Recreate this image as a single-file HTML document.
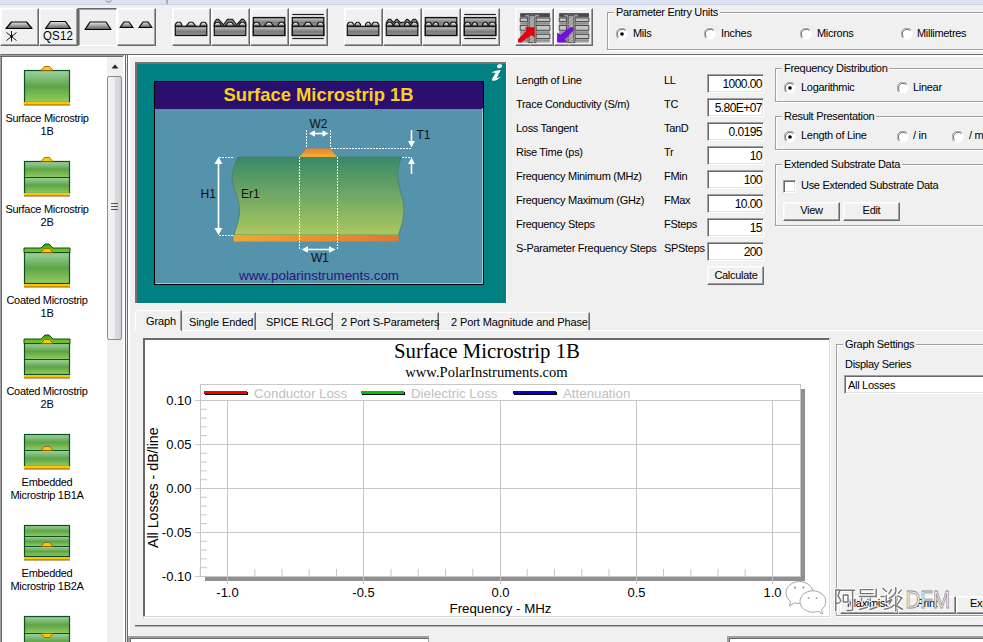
<!DOCTYPE html><html><head><meta charset="utf-8"><style>
*{margin:0;padding:0;box-sizing:border-box}
body{width:983px;height:642px;overflow:hidden;background:#f0f0f0;position:relative;font-family:"Liberation Sans",sans-serif;font-size:11px;color:#000}
.t{position:absolute;white-space:nowrap;line-height:13px;letter-spacing:-0.3px}
.btn{position:absolute;background:#f0f0f0;border-style:solid;border-width:1px;border-color:#fff #696969 #696969 #fff;box-shadow:inset -1px -1px 0 #a0a0a0, inset 1px 1px 0 #f8f8f8}
.btnp{position:absolute;background:#f0f0f0;border-style:solid;border-width:1px;border-color:#696969 #fff #fff #696969;box-shadow:inset 1px 1px 0 #a0a0a0}
.grp{position:absolute;border:1px solid #a0a0a0;box-shadow:1px 1px 0 #fff, inset 1px 1px 0 #fff}
.grpt{position:absolute;background:#f0f0f0;padding:0 2px;white-space:nowrap;line-height:13px;letter-spacing:-0.3px}
.edit{position:absolute;background:#fff;border-style:solid;border-width:1px;border-color:#a0a0a0 #fff #fff #a0a0a0;box-shadow:inset 1px 1px 0 #696969, inset -1px -1px 0 #e3e3e3}
</style></head><body>
<div style="position:absolute;left:0px;top:0px;width:983px;height:4px;background:#dbe3f3"></div>
<div style="position:absolute;left:0px;top:4px;width:983px;height:1px;background:#c9d3e6"></div>
<div class="btn" style="left:0px;top:8px;width:39px;height:38px"></div>
<div class="btn" style="left:39px;top:8px;width:39px;height:38px"></div>
<div class="btnp" style="left:78px;top:8px;width:39px;height:38px"></div>
<div class="btn" style="left:117px;top:8px;width:39px;height:38px"></div>
<div class="btn" style="left:172px;top:8px;width:39px;height:38px"></div>
<div class="btn" style="left:211px;top:8px;width:39px;height:38px"></div>
<div class="btn" style="left:250px;top:8px;width:39px;height:38px"></div>
<div class="btn" style="left:289px;top:8px;width:39px;height:38px"></div>
<div class="btn" style="left:344px;top:8px;width:39px;height:38px"></div>
<div class="btn" style="left:383px;top:8px;width:39px;height:38px"></div>
<div class="btn" style="left:422px;top:8px;width:39px;height:38px"></div>
<div class="btn" style="left:461px;top:8px;width:39px;height:38px"></div>
<div class="btn" style="left:515px;top:8px;width:39px;height:38px"></div>
<div class="btn" style="left:554px;top:8px;width:39px;height:38px"></div>
<div class="grp" style="left:607px;top:12px;width:400px;height:38px"></div>
<div class="grpt" style="left:614px;top:6px">Parameter Entry Units</div>
<svg style="position:absolute;left:616px;top:28px" width="12" height="12" viewBox="0 0 12 12"><circle cx="6" cy="6" r="5.5" fill="#fff"/><path d="M10.2 1.8 A5.5 5.5 0 0 0 1.8 10.2" stroke="#a0a0a0" stroke-width="1" fill="none"/><path d="M9.3 2.7 A4.3 4.3 0 0 0 2.7 9.3" stroke="#696969" stroke-width="1" fill="none"/><circle cx="6" cy="6" r="1.8" fill="#000"/></svg>
<div class="t" style="left:633px;top:27px;">Mils</div>
<svg style="position:absolute;left:704px;top:28px" width="12" height="12" viewBox="0 0 12 12"><circle cx="6" cy="6" r="5.5" fill="#fff"/><path d="M10.2 1.8 A5.5 5.5 0 0 0 1.8 10.2" stroke="#a0a0a0" stroke-width="1" fill="none"/><path d="M9.3 2.7 A4.3 4.3 0 0 0 2.7 9.3" stroke="#696969" stroke-width="1" fill="none"/></svg>
<div class="t" style="left:721px;top:27px;">Inches</div>
<svg style="position:absolute;left:800px;top:28px" width="12" height="12" viewBox="0 0 12 12"><circle cx="6" cy="6" r="5.5" fill="#fff"/><path d="M10.2 1.8 A5.5 5.5 0 0 0 1.8 10.2" stroke="#a0a0a0" stroke-width="1" fill="none"/><path d="M9.3 2.7 A4.3 4.3 0 0 0 2.7 9.3" stroke="#696969" stroke-width="1" fill="none"/></svg>
<div class="t" style="left:817px;top:27px;">Microns</div>
<svg style="position:absolute;left:901px;top:28px" width="12" height="12" viewBox="0 0 12 12"><circle cx="6" cy="6" r="5.5" fill="#fff"/><path d="M10.2 1.8 A5.5 5.5 0 0 0 1.8 10.2" stroke="#a0a0a0" stroke-width="1" fill="none"/><path d="M9.3 2.7 A4.3 4.3 0 0 0 2.7 9.3" stroke="#696969" stroke-width="1" fill="none"/></svg>
<div class="t" style="left:917px;top:27px;">Millimetres</div>
<div style="position:absolute;left:0px;top:54px;width:983px;height:1px;background:#696969"></div>
<div style="position:absolute;left:0px;top:55px;width:125px;height:587px;background:#fff"></div>
<div style="position:absolute;left:0px;top:54px;width:1px;height:588px;background:#a0a0a0"></div>
<div style="position:absolute;left:1px;top:55px;width:1px;height:587px;background:#696969"></div>
<div style="position:absolute;left:0px;top:55px;width:124px;height:1px;background:#a0a0a0"></div>
<div style="position:absolute;left:0px;top:56px;width:123px;height:1px;background:#696969"></div>
<div style="position:absolute;left:124px;top:55px;width:1px;height:587px;background:#fff"></div>
<div style="position:absolute;left:125px;top:54px;width:1px;height:588px;background:#696969"></div>
<div style="position:absolute;left:107px;top:57px;width:16px;height:585px;background:#f0f0f0"></div>
<div style="position:absolute;left:127px;top:54px;width:1px;height:588px;background:#696969"></div>
<div style="position:absolute;left:128px;top:55px;width:855px;height:2px;background:#fff"></div>
<div style="position:absolute;left:128px;top:55px;width:2px;height:587px;background:#fff"></div>
<div style="position:absolute;left:135px;top:62px;width:372px;height:242px;background:#fff"></div>
<div style="position:absolute;left:135px;top:62px;width:371px;height:241px;background:#7a7070"></div>
<div style="position:absolute;left:137px;top:64px;width:369px;height:239px;background:#008080"></div>
<svg style="position:absolute;left:137px;top:64px" width="369" height="239" viewBox="137 64 369 239">
<defs>
<linearGradient id="diel" x1="0" y1="0" x2="0" y2="1"><stop offset="0" stop-color="#3a8868"/><stop offset="1" stop-color="#aac860"/></linearGradient>
<linearGradient id="gnd" x1="0" y1="0" x2="1" y2="0"><stop offset="0" stop-color="#f0a830"/><stop offset="1" stop-color="#e07830"/></linearGradient>
<linearGradient id="trc" x1="0" y1="0" x2="0" y2="1"><stop offset="0" stop-color="#e8802c"/><stop offset="1" stop-color="#f4b030"/></linearGradient>
</defs>
<rect x="137" y="64" width="369" height="239" fill="#008080"/>
<rect x="154.5" y="81.5" width="329" height="203" fill="#5592ab" stroke="#000" stroke-width="1"/>
<rect x="155" y="82" width="328" height="27" fill="#2b0f6e"/>
<path d="M155.5 283.5 H482.5 V108" stroke="#9cc8dc" stroke-width="1" fill="none"/>
<text x="318.5" y="101" text-anchor="middle" font-family="Liberation Sans" font-weight="700" font-size="18.4" fill="#f8d020">Surface Microstrip 1B</text>
<path d="M238 157 H401.7 C398.5 164 397.5 171 398 178 C399 190 404 200 404 210 C404 220 400.5 228 398.5 235 H234 C236 228 239.6 220 239.6 210 C239.6 198 232 188 232 178 C232 170 235.5 162 238 157 Z" fill="url(#diel)" stroke="#3b7a5e" stroke-width="0.6"/>
<rect x="233.5" y="235" width="165" height="6.5" fill="url(#gnd)"/>
<path d="M299.5 157 L306.5 148.5 H330 L337 157 Z" fill="url(#trc)"/>
<g stroke="#fff" stroke-width="1" stroke-dasharray="2,1" fill="none">
<path d="M299.5 157 V249"/><path d="M337.5 157 V249"/>
<path d="M306.5 130 V148"/><path d="M330.5 130 V148"/>
<path d="M331 148.5 H412"/><path d="M402 157.5 H412"/>
<path d="M219 157.5 H233"/><path d="M219 235.5 H234"/>
</g>
<g stroke="#fff" stroke-width="1.6" fill="none">
<path d="M218.5 162 V230"/>
<path d="M312 133.5 H325"/>
<path d="M306 249.5 H331"/>
<path d="M411.5 130 V143"/>
<path d="M411.5 174 V162"/>
</g>
<g fill="#fff">
<path d="M218.5 157 L214.5 164 H222.5 Z"/><path d="M218.5 235 L214.5 228 H222.5 Z"/>
<path d="M309 133.5 L315 130.3 V136.7 Z"/><path d="M328.5 133.5 L322.5 130.3 V136.7 Z"/>
<path d="M301.5 249.5 L308 246.3 V252.7 Z"/><path d="M335.5 249.5 L329 246.3 V252.7 Z"/>
<path d="M411.5 147.5 L408 141 H415 Z"/><path d="M411.5 157.5 L408 164 H415 Z"/>
</g>
<g font-family="Liberation Sans" font-size="12" fill="#111">
<text x="309.5" y="128">W2</text>
<text x="416.5" y="139">T1</text>
<text x="200.5" y="197.5">H1</text>
<text x="241" y="197.5">Er1</text>
<text x="311" y="262">W1</text>
</g>
<text x="319" y="280" text-anchor="middle" font-family="Liberation Sans" font-size="13.4" fill="#2a1480">www.polarinstruments.com</text>
<ellipse cx="499.6" cy="66.2" rx="2.7" ry="1.9" transform="rotate(-15 499.6 66.2)" fill="#fff"/><path d="M491.3 72.6 Q495 70.2 500.8 70.1 L496.6 78.2 Q498.8 77.6 500.8 76.4 Q497.5 80.6 493.6 80.8 Q491.2 80.8 492.3 78.4 L495.6 72.9 Q493.5 72.4 491.3 72.6 Z" fill="#fff"/>
</svg>
<div class="t" style="left:516px;top:74px;">Length of Line</div>
<div class="t" style="left:664px;top:74px;">LL</div>
<div class="edit" style="left:707px;top:74px;width:57px;height:19px"></div>
<div class="t" style="left:707px;top:78px;width:55px;text-align:right;font-size:12px;letter-spacing:-0.55px">1000.00</div>
<div class="t" style="left:516px;top:98px;">Trace Conductivity (S/m)</div>
<div class="t" style="left:664px;top:98px;">TC</div>
<div class="edit" style="left:707px;top:98px;width:57px;height:19px"></div>
<div class="t" style="left:707px;top:102px;width:55px;text-align:right;font-size:12px;letter-spacing:-0.55px">5.80E+07</div>
<div class="t" style="left:516px;top:122px;">Loss Tangent</div>
<div class="t" style="left:664px;top:122px;">TanD</div>
<div class="edit" style="left:707px;top:122px;width:57px;height:19px"></div>
<div class="t" style="left:707px;top:126px;width:55px;text-align:right;font-size:12px;letter-spacing:-0.55px">0.0195</div>
<div class="t" style="left:516px;top:146px;">Rise Time (ps)</div>
<div class="t" style="left:664px;top:146px;">Tr</div>
<div class="edit" style="left:707px;top:146px;width:57px;height:19px"></div>
<div class="t" style="left:707px;top:150px;width:55px;text-align:right;font-size:12px;letter-spacing:-0.55px">10</div>
<div class="t" style="left:516px;top:170px;">Frequency Minimum (MHz)</div>
<div class="t" style="left:664px;top:170px;">FMin</div>
<div class="edit" style="left:707px;top:170px;width:57px;height:19px"></div>
<div class="t" style="left:707px;top:174px;width:55px;text-align:right;font-size:12px;letter-spacing:-0.55px">100</div>
<div class="t" style="left:516px;top:194px;">Frequency Maximum (GHz)</div>
<div class="t" style="left:664px;top:194px;">FMax</div>
<div class="edit" style="left:707px;top:194px;width:57px;height:19px"></div>
<div class="t" style="left:707px;top:198px;width:55px;text-align:right;font-size:12px;letter-spacing:-0.55px">10.00</div>
<div class="t" style="left:516px;top:218px;">Frequency Steps</div>
<div class="t" style="left:664px;top:218px;">FSteps</div>
<div class="edit" style="left:707px;top:218px;width:57px;height:19px"></div>
<div class="t" style="left:707px;top:222px;width:55px;text-align:right;font-size:12px;letter-spacing:-0.55px">15</div>
<div class="t" style="left:516px;top:242px;">S-Parameter Frequency Steps</div>
<div class="t" style="left:664px;top:242px;">SPSteps</div>
<div class="edit" style="left:707px;top:242px;width:57px;height:19px"></div>
<div class="t" style="left:707px;top:246px;width:55px;text-align:right;font-size:12px;letter-spacing:-0.55px">200</div>
<div class="btn" style="left:707px;top:266px;width:57px;height:19px"></div>
<div class="t" style="left:713px;top:269px;width:46px;text-align:center">Calculate</div>
<div class="grp" style="left:775px;top:68px;width:300px;height:34px"></div>
<div class="grpt" style="left:782px;top:62px">Frequency Distribution</div>
<svg style="position:absolute;left:784px;top:82px" width="12" height="12" viewBox="0 0 12 12"><circle cx="6" cy="6" r="5.5" fill="#fff"/><path d="M10.2 1.8 A5.5 5.5 0 0 0 1.8 10.2" stroke="#a0a0a0" stroke-width="1" fill="none"/><path d="M9.3 2.7 A4.3 4.3 0 0 0 2.7 9.3" stroke="#696969" stroke-width="1" fill="none"/><circle cx="6" cy="6" r="1.8" fill="#000"/></svg>
<div class="t" style="left:801px;top:81px;">Logarithmic</div>
<svg style="position:absolute;left:897px;top:82px" width="12" height="12" viewBox="0 0 12 12"><circle cx="6" cy="6" r="5.5" fill="#fff"/><path d="M10.2 1.8 A5.5 5.5 0 0 0 1.8 10.2" stroke="#a0a0a0" stroke-width="1" fill="none"/><path d="M9.3 2.7 A4.3 4.3 0 0 0 2.7 9.3" stroke="#696969" stroke-width="1" fill="none"/></svg>
<div class="t" style="left:913px;top:81px;">Linear</div>
<div class="grp" style="left:775px;top:116px;width:300px;height:34px"></div>
<div class="grpt" style="left:782px;top:110px">Result Presentation</div>
<svg style="position:absolute;left:784px;top:131px" width="12" height="12" viewBox="0 0 12 12"><circle cx="6" cy="6" r="5.5" fill="#fff"/><path d="M10.2 1.8 A5.5 5.5 0 0 0 1.8 10.2" stroke="#a0a0a0" stroke-width="1" fill="none"/><path d="M9.3 2.7 A4.3 4.3 0 0 0 2.7 9.3" stroke="#696969" stroke-width="1" fill="none"/><circle cx="6" cy="6" r="1.8" fill="#000"/></svg>
<div class="t" style="left:801px;top:129px;">Length of Line</div>
<svg style="position:absolute;left:897px;top:131px" width="12" height="12" viewBox="0 0 12 12"><circle cx="6" cy="6" r="5.5" fill="#fff"/><path d="M10.2 1.8 A5.5 5.5 0 0 0 1.8 10.2" stroke="#a0a0a0" stroke-width="1" fill="none"/><path d="M9.3 2.7 A4.3 4.3 0 0 0 2.7 9.3" stroke="#696969" stroke-width="1" fill="none"/></svg>
<div class="t" style="left:913px;top:129px;">/ in</div>
<svg style="position:absolute;left:952px;top:131px" width="12" height="12" viewBox="0 0 12 12"><circle cx="6" cy="6" r="5.5" fill="#fff"/><path d="M10.2 1.8 A5.5 5.5 0 0 0 1.8 10.2" stroke="#a0a0a0" stroke-width="1" fill="none"/><path d="M9.3 2.7 A4.3 4.3 0 0 0 2.7 9.3" stroke="#696969" stroke-width="1" fill="none"/></svg>
<div class="t" style="left:969px;top:129px;">/ m</div>
<div class="grp" style="left:775px;top:164px;width:300px;height:62px"></div>
<div class="grpt" style="left:782px;top:158px">Extended Substrate Data</div>
<div class="edit" style="left:783px;top:180px;width:13px;height:13px"></div>
<div class="t" style="left:801px;top:179px;">Use Extended Substrate Data</div>
<div class="btn" style="left:783px;top:202px;width:57px;height:19px"></div>
<div class="t" style="left:783px;top:204px;width:57px;text-align:center">View</div>
<div class="btn" style="left:843px;top:202px;width:57px;height:19px"></div>
<div class="t" style="left:843px;top:204px;width:57px;text-align:center">Edit</div>
<div style="position:absolute;left:135px;top:330px;width:848px;height:1px;background:#fff"></div>
<div style="position:absolute;left:135px;top:310px;width:47px;height:21px;background:#f0f0f0;border-left:1px solid #fff;border-top:1px solid #fff;border-right:1px solid #696969;border-top-left-radius:2px"></div>
<div style="position:absolute;left:180px;top:311px;width:1px;height:19px;background:#a0a0a0"></div>
<div class="t" style="left:146px;top:315px;letter-spacing:-0.1px">Graph</div>
<div style="position:absolute;left:182px;top:312px;width:74px;height:18px;border-top:1px solid #fff;border-right:1px solid #696969"></div>
<div style="position:absolute;left:254px;top:313px;width:1px;height:17px;background:#a0a0a0"></div>
<div class="t" style="left:189px;top:316px;letter-spacing:-0.1px">Single Ended</div>
<div style="position:absolute;left:257px;top:312px;width:76px;height:18px;border-top:1px solid #fff;border-right:1px solid #696969"></div>
<div style="position:absolute;left:331px;top:313px;width:1px;height:17px;background:#a0a0a0"></div>
<div class="t" style="left:266px;top:316px;letter-spacing:-0.1px">SPICE RLGC</div>
<div style="position:absolute;left:334px;top:312px;width:105px;height:18px;border-top:1px solid #fff;border-right:1px solid #696969"></div>
<div style="position:absolute;left:437px;top:313px;width:1px;height:17px;background:#a0a0a0"></div>
<div class="t" style="left:341px;top:316px;letter-spacing:-0.1px">2 Port S-Parameters</div>
<div style="position:absolute;left:440px;top:312px;width:150px;height:18px;border-top:1px solid #fff;border-right:1px solid #696969"></div>
<div style="position:absolute;left:588px;top:313px;width:1px;height:17px;background:#a0a0a0"></div>
<div class="t" style="left:451px;top:316px;letter-spacing:-0.1px">2 Port Magnitude and Phase</div>
<div style="position:absolute;left:135px;top:625px;width:848px;height:1px;background:#696969"></div>
<div style="position:absolute;left:135px;top:626px;width:848px;height:1px;background:#b4b4b4"></div>
<div style="position:absolute;left:143px;top:338px;width:688px;height:280px;background:#fff;border-style:solid;border-width:2px 2px 2px 2px;border-color:#696969 #fff #fff #696969"></div>
<div style="position:absolute;left:829px;top:338px;width:1px;height:279px;background:#d8d8d8"></div>
<div style="position:absolute;left:143px;top:616px;width:687px;height:1px;background:#d8d8d8"></div>
<svg style="position:absolute;left:145px;top:340px" width="684" height="276" viewBox="145 340 684 276">
<text x="487" y="357.5" text-anchor="middle" font-family="Liberation Serif" font-size="20.8" fill="#000">Surface Microstrip 1B</text>
<text x="486.5" y="377" text-anchor="middle" font-family="Liberation Serif" font-size="14.55" fill="#000">www.PolarInstruments.com</text>
<rect x="801" y="389" width="4" height="192" fill="#909090"/>
<rect x="205" y="577" width="600" height="4" fill="#909090"/>
<rect x="200.5" y="384.5" width="600" height="16" fill="#fff" stroke="#c8c8c8"/>
<rect x="200.5" y="400.5" width="600" height="176" fill="#fff" stroke="#c8c8c8"/>
<g stroke="#c8c8c8" stroke-width="1">
<path d="M227.5 400 V584"/><path d="M363.5 400 V584"/><path d="M500.5 400 V584"/><path d="M636.5 400 V584"/><path d="M772.5 400 V584"/>
<path d="M195 400.5 H800"/><path d="M195 444.5 H800"/><path d="M195 488.5 H800"/><path d="M195 532.5 H800"/><path d="M195 576.5 H800"/>
<path d="M200 409.3 H207"/><path d="M200 418.1 H207"/><path d="M200 426.9 H207"/><path d="M200 435.7 H207"/><path d="M200 453.3 H207"/><path d="M200 462.1 H207"/><path d="M200 470.9 H207"/><path d="M200 479.7 H207"/><path d="M200 497.3 H207"/><path d="M200 506.1 H207"/><path d="M200 514.9 H207"/><path d="M200 523.7 H207"/><path d="M200 541.3 H207"/><path d="M200 550.1 H207"/><path d="M200 558.9 H207"/><path d="M200 567.7 H207"/><path d="M200.2 569 V576"/><path d="M254.8 569 V576"/><path d="M282.0 569 V576"/><path d="M309.2 569 V576"/><path d="M336.5 569 V576"/><path d="M391.0 569 V576"/><path d="M418.2 569 V576"/><path d="M445.5 569 V576"/><path d="M472.8 569 V576"/><path d="M527.2 569 V576"/><path d="M554.5 569 V576"/><path d="M581.8 569 V576"/><path d="M609.0 569 V576"/><path d="M663.5 569 V576"/><path d="M690.8 569 V576"/><path d="M718.0 569 V576"/><path d="M745.2 569 V576"/>
</g>
<g font-family="Liberation Sans" font-size="13" fill="#000">
<text x="191.5" y="405" text-anchor="end">0.10</text>
<text x="191.5" y="449" text-anchor="end">0.05</text>
<text x="191.5" y="493" text-anchor="end">0.00</text>
<text x="191.5" y="537" text-anchor="end">-0.05</text>
<text x="191.5" y="581" text-anchor="end">-0.10</text>
<text x="227.5" y="597" text-anchor="middle">-1.0</text>
<text x="363.5" y="597" text-anchor="middle">-0.5</text>
<text x="500.5" y="597" text-anchor="middle">0.0</text>
<text x="636.5" y="597" text-anchor="middle">0.5</text>
<text x="772.5" y="597" text-anchor="middle">1.0</text>
<text x="500.5" y="613" text-anchor="middle" font-size="13.3">Frequency - MHz</text>
<text transform="translate(158 487.7) rotate(-90)" text-anchor="middle" font-size="14.2">All Losses - dB/line</text>
</g>
<g font-family="Liberation Sans" font-size="13.3" fill="#c0c0c0">
<text x="254" y="398">Conductor Loss</text>
<text x="411" y="398">Dielectric Loss</text>
<text x="563" y="398">Attenuation</text>
</g>
<rect x="205" y="392" width="43" height="3" fill="#000"/><rect x="204" y="391" width="43" height="3" fill="#f00000"/>
<rect x="362" y="392" width="43" height="3" fill="#000"/><rect x="361" y="391" width="43" height="3" fill="#00c000"/>
<rect x="514" y="392" width="43" height="3" fill="#000"/><rect x="513" y="391" width="43" height="3" fill="#0000e0"/>
</svg>
<div class="grp" style="left:836px;top:344px;width:300px;height:272px"></div>
<div class="grpt" style="left:843px;top:338px">Graph Settings</div>
<div class="t" style="left:845px;top:358px;">Display Series</div>
<div class="edit" style="left:844px;top:375px;width:200px;height:19px"></div>
<div class="t" style="left:848px;top:379px;">All Losses</div>
<div class="btn" style="left:840px;top:596px;width:58px;height:18px"></div>
<div class="t" style="left:840px;top:597px;width:58px;text-align:center">Maximise</div>
<div class="btn" style="left:898px;top:596px;width:58px;height:18px"></div>
<div class="t" style="left:898px;top:597px;width:58px;text-align:center">Print</div>
<div class="btn" style="left:956px;top:596px;width:58px;height:18px"></div>
<div class="t" style="left:956px;top:597px;width:58px;text-align:center">Export</div>
<div style="position:absolute;left:128px;top:636px;width:301px;height:10px;background:#fff;border-style:solid;border-width:2px 0 0 2px;border-color:#a0a0a0;box-shadow:inset 1px 1px 0 #696969"></div>
<div style="position:absolute;left:428px;top:636px;width:1px;height:6px;background:#a0a0a0"></div>
<div style="position:absolute;left:727px;top:636px;width:260px;height:10px;background:#fff;border-style:solid;border-width:2px 0 0 2px;border-color:#a0a0a0;box-shadow:inset 1px 1px 0 #696969"></div>
<svg style="position:absolute;left:0;top:0" width="107" height="642" viewBox="0 0 107 642"><defs><linearGradient id="gb" x1="0" y1="0" x2="0" y2="1"><stop offset="0" stop-color="#a0d098"/><stop offset="0.15" stop-color="#8cc488"/><stop offset="0.5" stop-color="#5ea446"/><stop offset="1" stop-color="#94cc62"/></linearGradient><linearGradient id="gc" x1="0" y1="0" x2="0" y2="1"><stop offset="0" stop-color="#3a9a10"/><stop offset="1" stop-color="#8ad020"/></linearGradient></defs><rect x="24.5" y="70.5" width="45" height="32" fill="url(#gb)"/><rect x="24.5" y="70.5" width="45" height="32" fill="none" stroke="#0b4f22" stroke-width="1.2"/><path d="M41 70.5 L44.5 66.5 H49.5 L53 70.5 Z" fill="#ffc800" stroke="#8a5800" stroke-width="0.8"/><rect x="24" y="102" width="46" height="3" fill="#ffc400"/><rect x="24" y="104.5" width="46" height="1" fill="#8a5a10"/><rect x="24.5" y="161.5" width="45" height="16" fill="url(#gb)"/><rect x="24.5" y="177.5" width="45" height="16" fill="url(#gb)"/><rect x="24.5" y="161.5" width="45" height="32" fill="none" stroke="#0b4f22" stroke-width="1.2"/><path d="M24.5 177.5 H69.5" stroke="#0b4f22" stroke-width="1.2"/><path d="M41 161.5 L44.5 157.5 H49.5 L53 161.5 Z" fill="#ffc800" stroke="#8a5800" stroke-width="0.8"/><rect x="24" y="193" width="46" height="3" fill="#ffc400"/><rect x="24" y="195.5" width="46" height="1" fill="#8a5a10"/><path d="M24 248 H41 L45 244 H49 L53 248 H70 V252.5 H24 Z" fill="url(#gc)" stroke="#0b4f22" stroke-width="1"/><rect x="24.5" y="252.5" width="45" height="31" fill="url(#gb)"/><rect x="24.5" y="252.5" width="45" height="31" fill="none" stroke="#0b4f22" stroke-width="1.2"/><path d="M41 252.5 L44.5 248.5 H49.5 L53 252.5 Z" fill="#ffc800" stroke="#8a5800" stroke-width="0.8"/><rect x="24" y="284" width="46" height="3" fill="#ffc400"/><rect x="24" y="286.5" width="46" height="1" fill="#8a5a10"/><path d="M24 339 H41 L45 335 H49 L53 339 H70 V343.5 H24 Z" fill="url(#gc)" stroke="#0b4f22" stroke-width="1"/><rect x="24.5" y="343.5" width="45" height="16" fill="url(#gb)"/><rect x="24.5" y="359.5" width="45" height="15" fill="url(#gb)"/><rect x="24.5" y="343.5" width="45" height="31" fill="none" stroke="#0b4f22" stroke-width="1.2"/><path d="M24.5 359.5 H69.5" stroke="#0b4f22" stroke-width="1.2"/><path d="M41 343.5 L44.5 339.5 H49.5 L53 343.5 Z" fill="#ffc800" stroke="#8a5800" stroke-width="0.8"/><rect x="24" y="375" width="46" height="3" fill="#ffc400"/><rect x="24" y="377.5" width="46" height="1" fill="#8a5a10"/><rect x="24.5" y="434.5" width="45" height="16" fill="url(#gb)"/><rect x="24.5" y="450.5" width="45" height="16" fill="url(#gb)"/><rect x="24.5" y="434.5" width="45" height="32" fill="none" stroke="#0b4f22" stroke-width="1.2"/><path d="M24.5 450.5 H69.5" stroke="#0b4f22" stroke-width="1.2"/><path d="M41 450.5 L44.5 446.5 H49.5 L53 450.5 Z" fill="#ffc800" stroke="#8a5800" stroke-width="0.8"/><rect x="24" y="466" width="46" height="3" fill="#ffc400"/><rect x="24" y="468.5" width="46" height="1" fill="#8a5a10"/><rect x="24.5" y="525.5" width="45" height="11" fill="url(#gb)"/><rect x="24.5" y="536.5" width="45" height="10" fill="url(#gb)"/><rect x="24.5" y="546.5" width="45" height="10" fill="url(#gb)"/><rect x="24.5" y="525.5" width="45" height="31" fill="none" stroke="#0b4f22" stroke-width="1.2"/><path d="M24.5 536.5 H69.5" stroke="#0b4f22" stroke-width="1.2"/><path d="M24.5 546.5 H69.5" stroke="#0b4f22" stroke-width="1.2"/><path d="M41 546.5 L44.5 542.5 H49.5 L53 546.5 Z" fill="#ffc800" stroke="#8a5800" stroke-width="0.8"/><rect x="24" y="557" width="46" height="3" fill="#ffc400"/><rect x="24" y="559.5" width="46" height="1" fill="#8a5a10"/><rect x="24.5" y="616.5" width="45" height="17" fill="url(#gb)"/><rect x="24.5" y="633.5" width="45" height="17" fill="url(#gb)"/><rect x="24.5" y="650.5" width="45" height="10" fill="url(#gb)"/><rect x="24.5" y="616.5" width="45" height="44" fill="none" stroke="#0b4f22" stroke-width="1.2"/><path d="M24.5 633.5 H69.5" stroke="#0b4f22" stroke-width="1.2"/><path d="M24.5 650.5 H69.5" stroke="#0b4f22" stroke-width="1.2"/><path d="M41 633.5 L44.5 637.5 H49.5 L53 633.5 Z" fill="#ffc800" stroke="#8a5800" stroke-width="0.8"/></svg>
<div class="t" style="left:0;top:112px;width:94px;text-align:center;line-height:12.5px">Surface Microstrip<br>1B</div>
<div class="t" style="left:0;top:203px;width:94px;text-align:center;line-height:12.5px">Surface Microstrip<br>2B</div>
<div class="t" style="left:0;top:294px;width:94px;text-align:center;line-height:12.5px">Coated Microstrip<br>1B</div>
<div class="t" style="left:0;top:385px;width:94px;text-align:center;line-height:12.5px">Coated Microstrip<br>2B</div>
<div class="t" style="left:0;top:476px;width:94px;text-align:center;line-height:12.5px">Embedded<br>Microstrip 1B1A</div>
<div class="t" style="left:0;top:567px;width:94px;text-align:center;line-height:12.5px">Embedded<br>Microstrip 1B2A</div>
<div style="position:absolute;left:0px;top:54px;width:1px;height:588px;background:#a0a0a0"></div>
<div style="position:absolute;left:1px;top:55px;width:1px;height:587px;background:#696969"></div>
<div style="position:absolute;left:0px;top:55px;width:124px;height:1px;background:#a0a0a0"></div>
<div style="position:absolute;left:0px;top:56px;width:123px;height:1px;background:#696969"></div>
<div style="position:absolute;left:107px;top:57px;width:16px;height:585px;background:#f0f0f0"></div>
<svg style="position:absolute;left:107px;top:57px" width="16" height="20"><path d="M4.5 11.5 L8 7.5 L11.5 11.5 Z" fill="#222"/></svg>
<div style="position:absolute;left:107px;top:76px;width:15px;height:264px;border:1px solid #8c8c8c;border-radius:2px;background:linear-gradient(90deg,#f2f2f2 0%,#f0f0f0 45%,#dcdce0 55%,#d0d0d6 100%)"></div>
<svg style="position:absolute;left:107px;top:200px" width="15" height="14"><g stroke="#555" stroke-width="1"><path d="M4 3.5 H11"/><path d="M4 6.5 H11"/><path d="M4 9.5 H11"/></g></svg>
<svg style="position:absolute;left:0;top:0" width="600" height="54" viewBox="0 0 600 54"><defs><linearGradient id="tg" x1="0" y1="0" x2="0" y2="1"><stop offset="0" stop-color="#ececec"/><stop offset="1" stop-color="#5a5a5a"/></linearGradient><linearGradient id="bg" x1="0" y1="0" x2="0" y2="1"><stop offset="0" stop-color="#6a6a6a"/><stop offset="0.2" stop-color="#b4b4b4"/><stop offset="0.55" stop-color="#7c7c7c"/><stop offset="1" stop-color="#909090"/></linearGradient><linearGradient id="ug" x1="0" y1="0" x2="0" y2="1"><stop offset="0" stop-color="#ffffff"/><stop offset="1" stop-color="#7a7a7a"/></linearGradient></defs><path d="M6 28.5 L11.5 22 H26.5 L32 28.5 Z" fill="url(#tg)" stroke="#000" stroke-width="1.2" stroke-linejoin="round"/><g stroke="#000" stroke-width="0.9"><circle cx="11.5" cy="36.2" r="0.9" fill="#000"/><path d="M11.5 31 V41.5"/><path d="M6.5 32.5 L16.5 40.5"/><path d="M16.5 32.5 L6.5 40.5"/></g><path d="M45.5 28.5 L50.5 21.5 H65.5 L70.5 28.5 Z" fill="url(#tg)" stroke="#000" stroke-width="1.2" stroke-linejoin="round"/></svg>
<div style="position:absolute;left:43px;top:28px;font-family:&quot;Liberation Sans&quot;;font-size:13.5px;line-height:15px;letter-spacing:0.2px;color:#000;transform:scaleX(0.85);transform-origin:0 0">QS12</div>
<svg style="position:absolute;left:0;top:0" width="600" height="54" viewBox="0 0 600 54"><defs><linearGradient id="tg2" x1="0" y1="0" x2="0" y2="1"><stop offset="0" stop-color="#ececec"/><stop offset="1" stop-color="#5a5a5a"/></linearGradient></defs><path d="M85 29.5 L90 22 H106 L111 29.5 Z" fill="url(#tg)" stroke="#000" stroke-width="1.2" stroke-linejoin="round"/><path d="M120 27.5 L124 22 H129 L133 27.5 Z" fill="url(#tg)" stroke="#000" stroke-width="1.2" stroke-linejoin="round"/><path d="M139 27.5 L143 22 H148 L152 27.5 Z" fill="url(#tg)" stroke="#000" stroke-width="1.2" stroke-linejoin="round"/><path d="M175.3 26.3 V24.3 L176.9 22.3 H180.20000000000002 L181.8 24.3 V26.3 Z" fill="url(#ug)" stroke="#111" stroke-width="1.1" stroke-linejoin="round"/><path d="M186 26.3 L189.2 22.3 H192.8 L196 26.3 Z" fill="url(#ug)" stroke="#111" stroke-width="1.1" stroke-linejoin="round"/><path d="M200.2 26.3 V24.3 L201.79999999999998 22.3 H205.20000000000002 L206.8 24.3 V26.3 Z" fill="url(#ug)" stroke="#111" stroke-width="1.1" stroke-linejoin="round"/><rect x="175.3" y="26.3" width="31.5" height="9.2" fill="url(#bg)" stroke="#111" stroke-width="1.2"/><path d="M214.3 22.5 L216.5 19.3 L218.6 19.3 L221.6 22.6 L223.5 24.8 L227.5 19.3 L232.5 19.3 L236.5 24.8 L239.2 22.0 L241.4 19.3 L243.6 19.3 L245.8 22.5 V26.3 H214.3 Z" fill="#8c8c8c" stroke="#111" stroke-width="1.1" stroke-linejoin="round"/><path d="M214.3 26.3 V24.3 L215.9 22.3 H219.20000000000002 L220.8 24.3 V26.3 Z" fill="url(#ug)" stroke="#111" stroke-width="1.1" stroke-linejoin="round"/><path d="M225 26.3 L228.2 22.3 H231.8 L235 26.3 Z" fill="url(#ug)" stroke="#111" stroke-width="1.1" stroke-linejoin="round"/><path d="M239.2 26.3 V24.3 L240.79999999999998 22.3 H244.20000000000002 L245.8 24.3 V26.3 Z" fill="url(#ug)" stroke="#111" stroke-width="1.1" stroke-linejoin="round"/><rect x="214.3" y="26.3" width="31.5" height="9.2" fill="url(#bg)" stroke="#111" stroke-width="1.2"/><rect x="253.3" y="17.5" width="31.5" height="8.8" fill="url(#bg)"/><path d="M253.3 26.3 V24.3 L254.9 22.3 H258.2 L259.8 24.3 V26.3 Z" fill="url(#ug)" stroke="#111" stroke-width="1.1" stroke-linejoin="round"/><path d="M264 26.3 L267.2 22.3 H270.8 L274 26.3 Z" fill="url(#ug)" stroke="#111" stroke-width="1.1" stroke-linejoin="round"/><path d="M278.2 26.3 V24.3 L279.8 22.3 H283.2 L284.8 24.3 V26.3 Z" fill="url(#ug)" stroke="#111" stroke-width="1.1" stroke-linejoin="round"/><rect x="253.3" y="26.3" width="31.5" height="9.2" fill="url(#bg)" stroke="#111" stroke-width="1.2"/><rect x="253.3" y="17.5" width="31.5" height="18" fill="none" stroke="#111" stroke-width="1.2"/><rect x="292.3" y="17.5" width="31.5" height="8.8" fill="url(#bg)"/><path d="M292.3 26.3 V24.3 L293.90000000000003 22.3 H297.2 L298.8 24.3 V26.3 Z" fill="url(#ug)" stroke="#111" stroke-width="1.1" stroke-linejoin="round"/><path d="M303 26.3 L306.2 22.3 H309.8 L313 26.3 Z" fill="url(#ug)" stroke="#111" stroke-width="1.1" stroke-linejoin="round"/><path d="M317.2 26.3 V24.3 L318.8 22.3 H322.2 L323.8 24.3 V26.3 Z" fill="url(#ug)" stroke="#111" stroke-width="1.1" stroke-linejoin="round"/><rect x="292.3" y="26.3" width="31.5" height="9.2" fill="url(#bg)" stroke="#111" stroke-width="1.2"/><rect x="292.3" y="17.5" width="31.5" height="18" fill="none" stroke="#111" stroke-width="1.2"/><path d="M292.3 14.5 H323.8" stroke="#222" stroke-width="1.2"/><path d="M292.3 38.5 H323.8" stroke="#222" stroke-width="1.2"/><path d="M347.3 26.3 V24.3 L348.90000000000003 22.3 H352.2 L353.8 24.3 V26.3 Z" fill="url(#ug)" stroke="#111" stroke-width="1.1" stroke-linejoin="round"/><path d="M355 26.3 V24.3 L356.6 22.3 H358.9 L360.5 24.3 V26.3 Z" fill="url(#ug)" stroke="#111" stroke-width="1.1" stroke-linejoin="round"/><path d="M365.5 26.3 V24.3 L367.1 22.3 H369.4 L371 24.3 V26.3 Z" fill="url(#ug)" stroke="#111" stroke-width="1.1" stroke-linejoin="round"/><path d="M372 26.3 V24.3 L373.6 22.3 H377.2 L378.8 24.3 V26.3 Z" fill="url(#ug)" stroke="#111" stroke-width="1.1" stroke-linejoin="round"/><rect x="347.3" y="26.3" width="31.5" height="9.2" fill="url(#bg)" stroke="#111" stroke-width="1.2"/><path d="M386.3 22.5 L388.5 19.3 L390.6 19.3 L393.6 22.6 L394.0 22.0 L396.2 19.3 L397.3 19.3 L400.3 22.6 L404.5 22.0 L406.7 19.3 L407.8 19.3 L410.8 22.6 L411.0 22.0 L413.2 19.3 L415.6 19.3 L417.8 22.5 V26.3 H386.3 Z" fill="#8c8c8c" stroke="#111" stroke-width="1.1" stroke-linejoin="round"/><path d="M386.3 26.3 V24.3 L387.90000000000003 22.3 H391.2 L392.8 24.3 V26.3 Z" fill="url(#ug)" stroke="#111" stroke-width="1.1" stroke-linejoin="round"/><path d="M394 26.3 V24.3 L395.6 22.3 H397.9 L399.5 24.3 V26.3 Z" fill="url(#ug)" stroke="#111" stroke-width="1.1" stroke-linejoin="round"/><path d="M404.5 26.3 V24.3 L406.1 22.3 H408.4 L410 24.3 V26.3 Z" fill="url(#ug)" stroke="#111" stroke-width="1.1" stroke-linejoin="round"/><path d="M411 26.3 V24.3 L412.6 22.3 H416.2 L417.8 24.3 V26.3 Z" fill="url(#ug)" stroke="#111" stroke-width="1.1" stroke-linejoin="round"/><rect x="386.3" y="26.3" width="31.5" height="9.2" fill="url(#bg)" stroke="#111" stroke-width="1.2"/><rect x="425.3" y="17.5" width="31.5" height="8.8" fill="url(#bg)"/><path d="M425.3 26.3 V24.3 L426.90000000000003 22.3 H430.2 L431.8 24.3 V26.3 Z" fill="url(#ug)" stroke="#111" stroke-width="1.1" stroke-linejoin="round"/><path d="M433 26.3 V24.3 L434.6 22.3 H436.9 L438.5 24.3 V26.3 Z" fill="url(#ug)" stroke="#111" stroke-width="1.1" stroke-linejoin="round"/><path d="M443.5 26.3 V24.3 L445.1 22.3 H447.4 L449 24.3 V26.3 Z" fill="url(#ug)" stroke="#111" stroke-width="1.1" stroke-linejoin="round"/><path d="M450 26.3 V24.3 L451.6 22.3 H455.2 L456.8 24.3 V26.3 Z" fill="url(#ug)" stroke="#111" stroke-width="1.1" stroke-linejoin="round"/><rect x="425.3" y="26.3" width="31.5" height="9.2" fill="url(#bg)" stroke="#111" stroke-width="1.2"/><rect x="425.3" y="17.5" width="31.5" height="18" fill="none" stroke="#111" stroke-width="1.2"/><rect x="464.3" y="17.5" width="31.5" height="8.8" fill="url(#bg)"/><path d="M464.3 26.3 V24.3 L465.90000000000003 22.3 H469.2 L470.8 24.3 V26.3 Z" fill="url(#ug)" stroke="#111" stroke-width="1.1" stroke-linejoin="round"/><path d="M472 26.3 V24.3 L473.6 22.3 H475.9 L477.5 24.3 V26.3 Z" fill="url(#ug)" stroke="#111" stroke-width="1.1" stroke-linejoin="round"/><path d="M482.5 26.3 V24.3 L484.1 22.3 H486.4 L488 24.3 V26.3 Z" fill="url(#ug)" stroke="#111" stroke-width="1.1" stroke-linejoin="round"/><path d="M489 26.3 V24.3 L490.6 22.3 H494.2 L495.8 24.3 V26.3 Z" fill="url(#ug)" stroke="#111" stroke-width="1.1" stroke-linejoin="round"/><rect x="464.3" y="26.3" width="31.5" height="9.2" fill="url(#bg)" stroke="#111" stroke-width="1.2"/><rect x="464.3" y="17.5" width="31.5" height="18" fill="none" stroke="#111" stroke-width="1.2"/><path d="M464.3 14.5 H495.8" stroke="#222" stroke-width="1.2"/><path d="M464.3 38.5 H495.8" stroke="#222" stroke-width="1.2"/><rect x="520.2" y="13.2" width="29.7" height="29.4" fill="#a4a4a4"/><rect x="520.2" y="13.2" width="29.7" height="3.7" fill="#484848"/><rect x="520.2" y="18" width="7.2" height="3.5" fill="#c4c4c4" stroke="#444" stroke-width="0.9"/><rect x="520.2" y="25.5" width="7.2" height="4.699999999999999" fill="#c4c4c4" stroke="#444" stroke-width="0.9"/><rect x="536" y="18" width="13.9" height="3.5" fill="#c4c4c4" stroke="#444" stroke-width="0.9"/><rect x="536" y="25.5" width="13.9" height="4.699999999999999" fill="#c4c4c4" stroke="#444" stroke-width="0.9"/><rect x="536" y="34.3" width="13.9" height="4.200000000000003" fill="#c4c4c4" stroke="#444" stroke-width="0.9"/><path d="M520.2 23.5 H549.9000000000001" stroke="#8a8a8a" stroke-width="0.8"/><path d="M520.2 32.3 H549.9000000000001" stroke="#8a8a8a" stroke-width="0.8"/><path d="M520.2 40.5 H549.9000000000001" stroke="#8a8a8a" stroke-width="0.8"/><path d="M525 14.8 H539.3 V16.8 H536 V42.6 H528 V16.8 H525 Z" fill="#b8b8b8" stroke="#555" stroke-width="0.8"/><rect x="529.2" y="15.5" width="5.6" height="27.1" fill="#9a9a9a" stroke="#4a4a4a" stroke-width="0.8"/><path d="M529.5 21.0 L534.5 17.0" stroke="#c8c8c8" stroke-width="0.8"/><path d="M529.5 24.5 L534.5 20.5" stroke="#c8c8c8" stroke-width="0.8"/><path d="M529.5 28.0 L534.5 24.0" stroke="#c8c8c8" stroke-width="0.8"/><path d="M529.5 31.5 L534.5 27.5" stroke="#c8c8c8" stroke-width="0.8"/><path d="M529.5 35.0 L534.5 31.0" stroke="#c8c8c8" stroke-width="0.8"/><path d="M529.5 38.5 L534.5 34.5" stroke="#c8c8c8" stroke-width="0.8"/><path d="M529.5 42.0 L534.5 38.0" stroke="#c8c8c8" stroke-width="0.8"/><path d="M529.5 45.5 L534.5 41.5" stroke="#c8c8c8" stroke-width="0.8"/><path d="M518 39.3 L526.5 30.8 L525 27.2 H534.5 V37 L531 35.3 L521.3 42.6 H518 Z" fill="#e8000c"/><rect x="559.2" y="13.2" width="29.7" height="29.4" fill="#a4a4a4"/><rect x="559.2" y="13.2" width="29.7" height="3.7" fill="#484848"/><rect x="559.2" y="18" width="7.2" height="3.5" fill="#c4c4c4" stroke="#444" stroke-width="0.9"/><rect x="559.2" y="25.5" width="7.2" height="4.699999999999999" fill="#c4c4c4" stroke="#444" stroke-width="0.9"/><rect x="575" y="18" width="13.9" height="3.5" fill="#c4c4c4" stroke="#444" stroke-width="0.9"/><rect x="575" y="25.5" width="13.9" height="4.699999999999999" fill="#c4c4c4" stroke="#444" stroke-width="0.9"/><rect x="575" y="34.3" width="13.9" height="4.200000000000003" fill="#c4c4c4" stroke="#444" stroke-width="0.9"/><path d="M559.2 23.5 H588.9000000000001" stroke="#8a8a8a" stroke-width="0.8"/><path d="M559.2 32.3 H588.9000000000001" stroke="#8a8a8a" stroke-width="0.8"/><path d="M559.2 40.5 H588.9000000000001" stroke="#8a8a8a" stroke-width="0.8"/><path d="M564 14.8 H578.3 V16.8 H575 V42.6 H567 V16.8 H564 Z" fill="#b8b8b8" stroke="#555" stroke-width="0.8"/><rect x="568.2" y="15.5" width="5.6" height="27.1" fill="#9a9a9a" stroke="#4a4a4a" stroke-width="0.8"/><path d="M568.5 21.0 L573.5 17.0" stroke="#c8c8c8" stroke-width="0.8"/><path d="M568.5 24.5 L573.5 20.5" stroke="#c8c8c8" stroke-width="0.8"/><path d="M568.5 28.0 L573.5 24.0" stroke="#c8c8c8" stroke-width="0.8"/><path d="M568.5 31.5 L573.5 27.5" stroke="#c8c8c8" stroke-width="0.8"/><path d="M568.5 35.0 L573.5 31.0" stroke="#c8c8c8" stroke-width="0.8"/><path d="M568.5 38.5 L573.5 34.5" stroke="#c8c8c8" stroke-width="0.8"/><path d="M568.5 42.0 L573.5 38.0" stroke="#c8c8c8" stroke-width="0.8"/><path d="M568.5 45.5 L573.5 41.5" stroke="#c8c8c8" stroke-width="0.8"/><path d="M573.5999999999999 30.5 L565.0999999999999 39 L566.5999999999999 42.6 H557.0999999999999 V32.8 L560.5999999999999 34.5 L570.3 27.2 H573.5999999999999 Z" fill="#7010e0"/></svg>
<svg style="position:absolute;left:0;top:0" width="983" height="5"><path d="M106 0.5 Q108 4 111.5 0.5" stroke="#b07050" stroke-width="1" fill="none"/><path d="M167 0 V4" stroke="#b07050" stroke-width="1"/></svg>
<svg style="position:absolute;left:780px;top:575px" width="203" height="45" viewBox="780 575 203 45"><g stroke="#9a9a9a" stroke-width="0.9" fill="#fff"><path d="M799.5 581.5 C807 581.5 813 586.5 813 592.5 C813 598.5 807 603.5 799.5 603.5 C797.5 603.5 796 603.3 794.5 602.8 L789.5 606 L790.5 601.2 C787.5 599.2 786 596 786 592.5 C786 586.5 792 581.5 799.5 581.5 Z"/><path d="M812.8 590.8 C819.8 590.8 825.8 595.5 825.8 601.5 C825.8 604.8 824.2 607.5 821.5 609.5 L822.5 614 L818.3 611.3 C816.6 611.8 814.8 612.2 812.8 612.2 C805.8 612.2 800 607.5 800 601.5 C800 595.5 805.8 590.8 812.8 590.8 Z"/></g><g fill="#9a9a9a"><ellipse cx="795" cy="587.5" rx="0.9" ry="1.2"/><ellipse cx="803.5" cy="587.5" rx="0.9" ry="1.2"/><ellipse cx="808.5" cy="598" rx="0.9" ry="1.1"/><ellipse cx="816.5" cy="598" rx="0.9" ry="1.1"/></g><g transform="translate(834 588.5)" fill="none" stroke-linecap="round" stroke-linejoin="round"><path d="M1.8 1.1 V22.3 M1.8 1.5 H6 L4 7.5 Q7 11 6.5 13 Q5.5 15 2.5 15 M6.4 1.7 H20.7 M18.6 1.7 V21.5 Q18.6 22 13 22 M9.3 6.5 H14 V13.5 H9.3 Z" stroke="#fff" stroke-width="3.4"/><path d="M1.8 1.1 V22.3 M1.8 1.5 H6 L4 7.5 Q7 11 6.5 13 Q5.5 15 2.5 15 M6.4 1.7 H20.7 M18.6 1.7 V21.5 Q18.6 22 13 22 M9.3 6.5 H14 V13.5 H9.3 Z" stroke="#767676" stroke-width="1.45"/></g><g transform="translate(858.5 588.5)" fill="none" stroke-linecap="round" stroke-linejoin="round"><path d="M1.9 1.1 H14.7 M1.9 5.1 H14.7 M1.9 1.1 V5.1 M17.7 0.5 V8.3 M0.9 8 H17.7 M3 10 V12 M11.8 10 V12 M1 21 L9 18.8 M11.5 21 L18.5 18.5" stroke="#fff" stroke-width="3.4"/><path d="M1.9 1.1 H14.7 M1.9 5.1 H14.7 M1.9 1.1 V5.1 M17.7 0.5 V8.3 M0.9 8 H17.7 M3 10 V12 M11.8 10 V12 M1 21 L9 18.8 M11.5 21 L18.5 18.5" stroke="#767676" stroke-width="1.45"/></g><g transform="translate(882.5 588.5)" fill="none" stroke-linecap="round" stroke-linejoin="round"><path d="M0.3 -0.3 L4 3 M-1.5 8 H1.5 M3.7 7 V14 L9 11 M9.1 1 L6.4 5.2 M13.3 -0.7 V3 Q12.5 7 6.6 9.8 M18.8 1.4 L15.9 4.8 M15 7.3 L19.6 9.4 M9.1 11.5 L6.6 15.3 M13.3 8 V22.5 M11.6 16.5 Q8 20 2 20.7 M19.2 9.4 L15 15.7 M14.6 17.4 Q17 19.5 20.1 20.7" stroke="#fff" stroke-width="3.4"/><path d="M0.3 -0.3 L4 3 M-1.5 8 H1.5 M3.7 7 V14 L9 11 M9.1 1 L6.4 5.2 M13.3 -0.7 V3 Q12.5 7 6.6 9.8 M18.8 1.4 L15.9 4.8 M15 7.3 L19.6 9.4 M9.1 11.5 L6.6 15.3 M13.3 8 V22.5 M11.6 16.5 Q8 20 2 20.7 M19.2 9.4 L15 15.7 M14.6 17.4 Q17 19.5 20.1 20.7" stroke="#767676" stroke-width="1.45"/></g><text x="905.5" y="607.8" font-family="Liberation Sans" font-size="24.7" textLength="44.5" lengthAdjust="spacingAndGlyphs" fill="#fff" stroke="#8a8a8a" stroke-width="0.8">DFM</text></svg>
</body></html>
